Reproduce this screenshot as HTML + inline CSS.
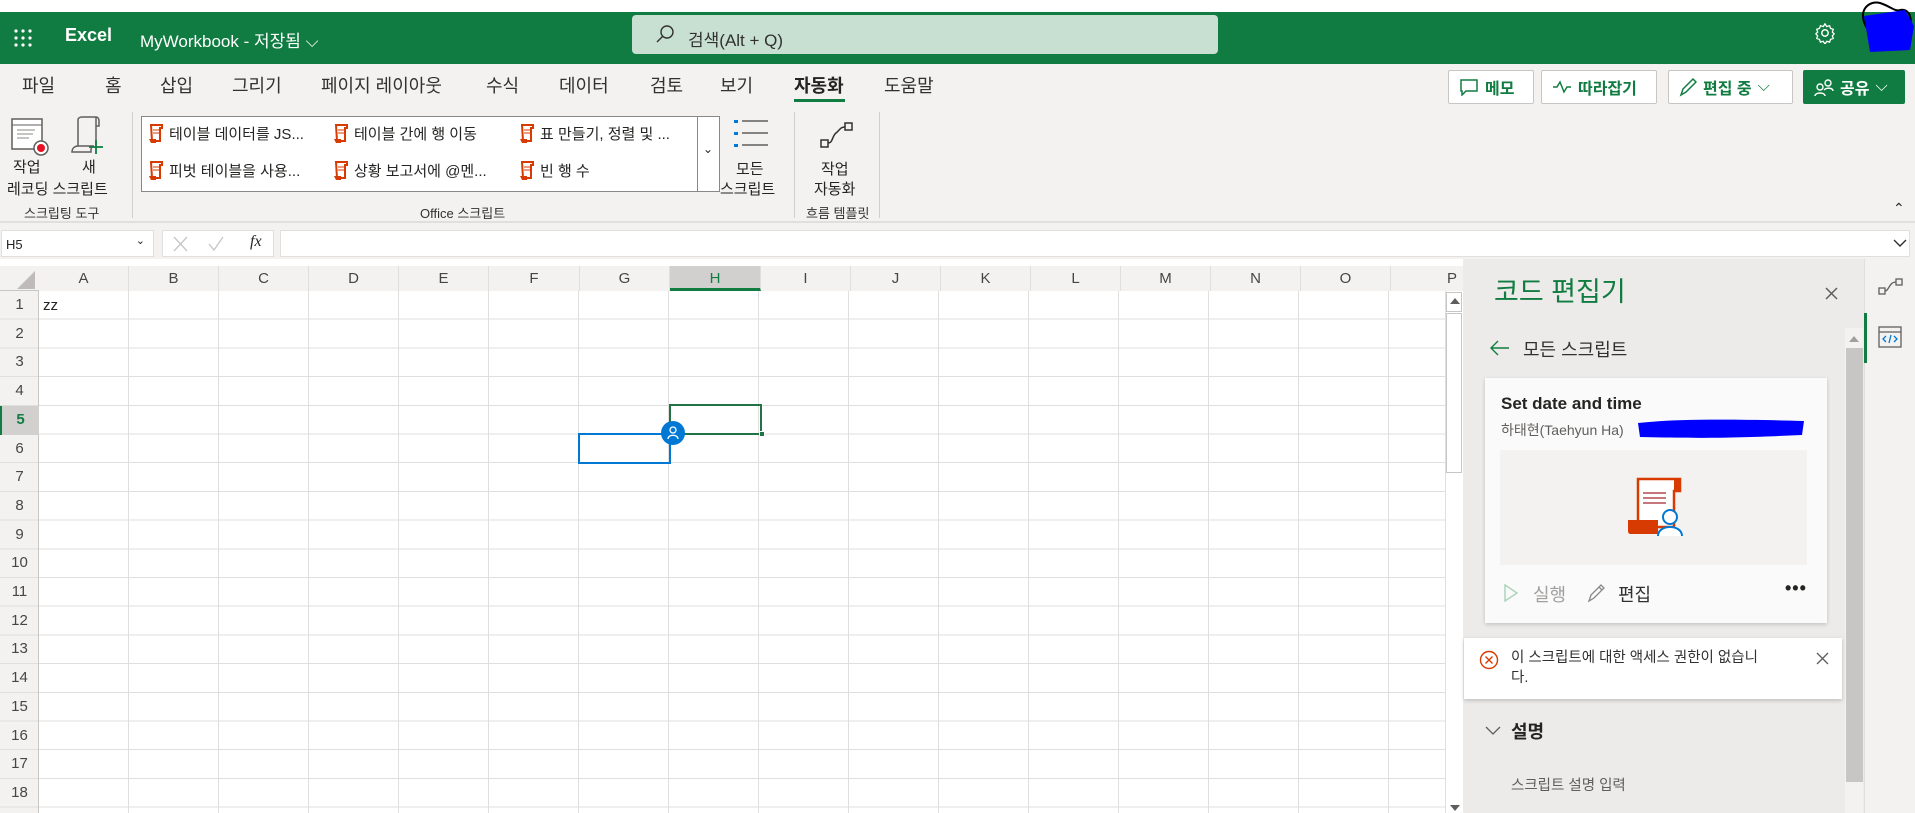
<!DOCTYPE html>
<html><head><meta charset="utf-8">
<style>
*{box-sizing:border-box;margin:0;padding:0}
body{width:1915px;height:813px;overflow:hidden;position:relative;background:#f3f2f1;font-family:"Liberation Sans","Noto Sans CJK KR",sans-serif;color:#252423}
.a{position:absolute;white-space:nowrap}
.top{left:0;top:12px;width:1915px;height:52px;background:#107c41}
.tab{top:72px;font-size:18px;color:#323130}
.btn{top:70px;height:34px;border:1px solid #c8c6c4;background:#fff;border-radius:2px;color:#107c41;font-weight:bold;font-size:16px;display:flex;align-items:center;padding-left:10px;gap:6px}
.gi{font-size:15px;color:#252423;display:flex;align-items:center;gap:5px}
.lbl{font-size:13px;color:#323130;top:203px}
.sep{top:112px;width:1px;height:106px;background:#d2d0ce}
.ch{top:266px;height:25px;background:#f3f2f1;font-size:15px;color:#484644;text-align:center;line-height:25px;border-right:1px solid #e1dfdd}
</style></head><body>
<div class="a" style="left:0;top:0;width:1915px;height:12px;background:#fff"></div>
<div class="a top"></div>
<svg class="a" style="left:14px;top:29px" width="18" height="18"><g fill="#fff"><circle cx="2" cy="2" r="1.6"/><circle cx="9" cy="2" r="1.6"/><circle cx="16" cy="2" r="1.6"/><circle cx="2" cy="9" r="1.6"/><circle cx="9" cy="9" r="1.6"/><circle cx="16" cy="9" r="1.6"/><circle cx="2" cy="16" r="1.6"/><circle cx="9" cy="16" r="1.6"/><circle cx="16" cy="16" r="1.6"/></g></svg>
<div class="a" style="left:65px;top:25px;color:#fff;font-size:18px;font-weight:bold">Excel</div>
<div class="a" style="left:140px;top:27px;color:#fff;font-size:17px">MyWorkbook - 저장됨 ⌵</div>
<div class="a" style="left:632px;top:15px;width:586px;height:39px;background:#c7e0d1;border-radius:4px"></div>
<svg class="a" style="left:655px;top:24px" width="20" height="20"><circle cx="12" cy="8" r="6" fill="none" stroke="#323130" stroke-width="1.4"/><line x1="8" y1="12" x2="2" y2="18" stroke="#323130" stroke-width="1.4"/></svg>
<div class="a" style="left:688px;top:26px;font-size:17px;color:#323130">검색(Alt + Q)</div>
<svg class="a" style="left:1814px;top:22px" width="22" height="22" viewBox="0 0 24 24"><circle cx="12" cy="12" r="3.5" fill="none" stroke="#fff" stroke-width="1.6"/><path d="M12 2l2 3 3-1 1 3 3 1-1 3 2 2-2 2 1 3-3 1-1 3-3-1-2 3-2-3-3 1-1-3-3-1 1-3-2-2 2-2-1-3 3-1 1-3 3 1z" fill="none" stroke="#fff" stroke-width="1.4"/></svg>
<svg class="a" style="left:1850px;top:0" width="65" height="56"><path d="M18 30 C5 10,20 0,30 3 C40 6,45 12,50 10 C60 8,64 20,58 35" fill="none" stroke="#000" stroke-width="2"/><path d="M14 16 L55 10 L64 26 L60 50 L20 52 Z" fill="#0000ff"/></svg>

<div class="a tab" style="left:22px">파일</div>
<div class="a tab" style="left:105px">홈</div>
<div class="a tab" style="left:160px">삽입</div>
<div class="a tab" style="left:232px">그리기</div>
<div class="a tab" style="left:321px">페이지 레이아웃</div>
<div class="a tab" style="left:486px">수식</div>
<div class="a tab" style="left:559px">데이터</div>
<div class="a tab" style="left:650px">검토</div>
<div class="a tab" style="left:720px">보기</div>
<div class="a tab" style="left:794px;font-weight:bold;color:#252423">자동화</div>
<div class="a" style="left:794px;top:99px;width:51px;height:3px;background:#107c41"></div>
<div class="a tab" style="left:884px">도움말</div>

<div class="a btn" style="left:1448px;width:86px"><svg width="20" height="18"><path d="M2 2h16v11H7l-4 4v-4H2z" fill="none" stroke="#107c41" stroke-width="1.5"/></svg>메모</div>
<div class="a btn" style="left:1541px;width:116px"><svg width="20" height="14"><path d="M1 7h4l3-5 4 10 3-5h4" fill="none" stroke="#107c41" stroke-width="1.5"/></svg>따라잡기</div>
<div class="a btn" style="left:1668px;width:125px"><svg width="18" height="20"><path d="M2 18l2-6L14 2l3 3L7 15z" fill="none" stroke="#107c41" stroke-width="1.5"/></svg>편집 중 <span style="font-weight:normal">⌵</span></div>
<div class="a btn" style="left:1803px;width:102px;background:#107c41;color:#fff;border-color:#107c41"><svg width="20" height="20"><circle cx="6" cy="10" r="3" fill="none" stroke="#fff" stroke-width="1.4"/><circle cx="14" cy="6" r="3" fill="none" stroke="#fff" stroke-width="1.4"/><path d="M1 19c0-4 10-4 10 0M10 13c3-3 9-2 9 1" fill="none" stroke="#fff" stroke-width="1.4"/></svg>공유 <span style="font-weight:normal">⌵</span></div>

<svg class="a" style="left:11px;top:118px" width="40" height="40"><rect x="1" y="1" width="30" height="30" fill="#fff" stroke="#605e5c" stroke-width="1.5"/><line x1="1" y1="7" x2="31" y2="7" stroke="#605e5c"/><g stroke="#8a8886"><line x1="6" y1="12" x2="24" y2="12"/><line x1="6" y1="16" x2="22" y2="16"/><line x1="6" y1="20" x2="18" y2="20"/></g><circle cx="30" cy="30" r="7" fill="#fff" stroke="#605e5c" stroke-width="1.5"/><circle cx="30" cy="30" r="4" fill="#e81123"/></svg>
<svg class="a" style="left:70px;top:116px" width="40" height="42"><path d="M8 30V4c0-2 2-3 4-3h14c2 0 3 2 3 4v5h-3M26 1v28" fill="none" stroke="#605e5c" stroke-width="1.5"/><path d="M2 36c0-4 3-6 6-6h16c-2 0-3 2-3 4v2z" fill="none" stroke="#605e5c" stroke-width="1.5"/><path d="M26 24v14M19 31h14" stroke="#107c41" stroke-width="1.8"/></svg>
<div class="a" style="left:13px;top:159px;font-size:15px;line-height:18px">작업</div>
<div class="a" style="left:82px;top:159px;font-size:15px;line-height:18px">새</div>
<div class="a" style="left:7px;top:178px;font-size:15px">레코딩 스크립트</div>
<div class="a lbl" style="left:24px">스크립팅 도구</div>
<div class="a sep" style="left:132px"></div>
<div class="a" style="left:141px;top:116px;width:579px;height:76px;background:#fff;border:1px solid #8a8886"></div>
<div class="a" style="left:697px;top:116px;width:1px;height:76px;background:#8a8886"></div>
<div class="a" style="left:703px;top:142px;font-size:12px">⌄</div>
<div class="a gi" style="left:148px;top:123px"><svg width="16" height="20"><path d="M3 1h11v3h-2v13H4z" fill="#fff" stroke="#d83b01" stroke-width="2"/><path d="M1 15h7v4H3z" fill="#d83b01"/><path d="M5 6h6M5 9h6" stroke="#d83b01"/></svg>테이블 데이터를 JS...</div>
<div class="a gi" style="left:333px;top:123px"><svg width="16" height="20"><path d="M3 1h11v3h-2v13H4z" fill="#fff" stroke="#d83b01" stroke-width="2"/><path d="M1 15h7v4H3z" fill="#d83b01"/><path d="M5 6h6M5 9h6" stroke="#d83b01"/></svg>테이블 간에 행 이동</div>
<div class="a gi" style="left:519px;top:123px"><svg width="16" height="20"><path d="M3 1h11v3h-2v13H4z" fill="#fff" stroke="#d83b01" stroke-width="2"/><path d="M1 15h7v4H3z" fill="#d83b01"/><path d="M5 6h6M5 9h6" stroke="#d83b01"/></svg>표 만들기, 정렬 및 ...</div>
<div class="a gi" style="left:148px;top:160px"><svg width="16" height="20"><path d="M3 1h11v3h-2v13H4z" fill="#fff" stroke="#d83b01" stroke-width="2"/><path d="M1 15h7v4H3z" fill="#d83b01"/><path d="M5 6h6M5 9h6" stroke="#d83b01"/></svg>피벗 테이블을 사용...</div>
<div class="a gi" style="left:333px;top:160px"><svg width="16" height="20"><path d="M3 1h11v3h-2v13H4z" fill="#fff" stroke="#d83b01" stroke-width="2"/><path d="M1 15h7v4H3z" fill="#d83b01"/><path d="M5 6h6M5 9h6" stroke="#d83b01"/></svg>상황 보고서에 @멘...</div>
<div class="a gi" style="left:519px;top:160px"><svg width="16" height="20"><path d="M3 1h11v3h-2v13H4z" fill="#fff" stroke="#d83b01" stroke-width="2"/><path d="M1 15h7v4H3z" fill="#d83b01"/><path d="M5 6h6M5 9h6" stroke="#d83b01"/></svg>빈 행 수</div>
<svg class="a" style="left:732px;top:118px" width="40" height="34"><g fill="#0078d4"><rect x="2" y="2" width="4" height="3"/><rect x="2" y="14" width="4" height="3"/><rect x="2" y="26" width="4" height="3"/></g><g stroke="#605e5c" stroke-width="1.5"><line x1="10" y1="3" x2="36" y2="3"/><line x1="10" y1="15" x2="36" y2="15"/><line x1="10" y1="27" x2="36" y2="27"/></g></svg>
<div class="a" style="left:736px;top:158px;font-size:15px">모든</div>
<div class="a" style="left:720px;top:178px;font-size:15px">스크립트</div>
<div class="a sep" style="left:794px"></div>
<svg class="a" style="left:820px;top:121px" width="34" height="30"><rect x="1" y="19" width="7" height="7" fill="none" stroke="#323130" stroke-width="1.5"/><rect x="25" y="2" width="7" height="7" fill="none" stroke="#323130" stroke-width="1.5"/><path d="M8 22c5 0 4-7 8-10s4-6 9-6" fill="none" stroke="#323130" stroke-width="1.5"/></svg>
<div class="a" style="left:821px;top:158px;font-size:15px">작업</div>
<div class="a" style="left:814px;top:178px;font-size:15px">자동화</div>
<div class="a lbl" style="left:806px">흐름 템플릿</div>
<div class="a lbl" style="left:420px">Office 스크립트</div>
<div class="a sep" style="left:879px"></div>
<div class="a" style="left:1893px;top:200px;font-size:14px">⌃</div>
<div class="a" style="left:0;top:221px;width:1915px;height:2px;background:#e1dfdd"></div>

<div class="a" style="left:0;top:229px;width:1915px;height:30px;background:#f3f2f1"></div>
<div class="a" style="left:1px;top:230px;width:153px;height:27px;background:#fff;border:1px solid #e1dfdd;font-size:13px;padding:6px 4px">H5<span style="position:absolute;right:8px;top:3px;font-size:11px">⌄</span></div>
<div class="a" style="left:162px;top:230px;width:112px;height:27px;background:#fff;border:1px solid #e1dfdd"></div>
<svg class="a" style="left:172px;top:234px" width="70" height="20"><path d="M2 3l13 14M15 3L2 17" stroke="#c8c6c4" stroke-width="1.3"/><path d="M37 10l5 6 9-13" fill="none" stroke="#c8c6c4" stroke-width="1.3"/></svg>
<div class="a" style="left:250px;top:233px;font-family:'Liberation Serif',serif;font-style:italic;font-size:16px">fx</div>
<div class="a" style="left:280px;top:230px;width:1630px;height:27px;background:#fff;border:1px solid #e1dfdd"></div>
<svg class="a" style="left:1893px;top:238px" width="14" height="10"><path d="M1 2l6 6 6-6" fill="none" stroke="#323130" stroke-width="1.4"/></svg>

<div class="a" style="left:0;top:259px;width:1463px;height:554px;background:#fff"></div>
<div class="a" style="left:0;top:266px;width:1463px;height:25px;background:#f3f2f1;border-bottom:1px solid #c8c6c4"></div>
<svg class="a" style="left:12px;top:270px" width="24" height="20"><path d="M23 1V19H5z" fill="#bebbb8"/></svg>
<div class="a ch" style="left:39px;width:90px">A</div><div class="a ch" style="left:129px;width:90px">B</div><div class="a ch" style="left:219px;width:90px">C</div><div class="a ch" style="left:309px;width:90px">D</div><div class="a ch" style="left:399px;width:90px">E</div><div class="a ch" style="left:489px;width:91px">F</div><div class="a ch" style="left:580px;width:90px">G</div><div class="a ch" style="left:670px;width:91px;background:#d2d0ce;color:#107c41;border-bottom:3px solid #107c41">H</div><div class="a ch" style="left:761px;width:90px">I</div><div class="a ch" style="left:851px;width:90px">J</div><div class="a ch" style="left:941px;width:90px">K</div><div class="a ch" style="left:1031px;width:90px">L</div><div class="a ch" style="left:1121px;width:90px">M</div><div class="a ch" style="left:1211px;width:90px">N</div><div class="a ch" style="left:1301px;width:90px">O</div><div class="a ch" style="left:1391px;width:72px;border:none;text-align:right;padding-right:6px">P</div>
<div class="a" style="left:39px;top:291px;width:1406px;height:522px;background-image:repeating-linear-gradient(to right,transparent 0,transparent 89px,#e1dfdd 89px,#e1dfdd 90px),repeating-linear-gradient(to bottom,transparent 0,transparent 27.7px,#e1dfdd 27.7px,#e1dfdd 28.7px)"></div>
<div class="a" style="left:0;top:291px;width:39px;height:522px;background:#f3f2f1;border-right:1px solid #c8c6c4;background-image:repeating-linear-gradient(to bottom,transparent 0,transparent 27.7px,#e1dfdd 27.7px,#e1dfdd 28.7px)"></div>
<div class="a" style="left:0;top:291px;width:39px;font-size:15px;color:#484644;line-height:28.7px;text-align:center;white-space:normal">1<br>2<br>3<br>4<br><span style="display:block;background:#d2d0ce;color:#107c41;font-weight:bold;border-left:2px solid #107c41">5</span>6<br>7<br>8<br>9<br>10<br>11<br>12<br>13<br>14<br>15<br>16<br>17<br>18</div>
<div class="a" style="left:43px;top:297px;font-size:15px">zz</div>
<div class="a" style="left:669px;top:404px;width:93px;height:31px;border:2px solid #217346"></div>
<div class="a" style="left:759px;top:431px;width:6px;height:6px;background:#217346;border:1px solid #fff"></div>
<div class="a" style="left:578px;top:433px;width:93px;height:31px;border:2px solid #0078d4"></div>
<div class="a" style="left:661px;top:421px;width:24px;height:24px;border-radius:50%;background:#0078d4"></div>
<svg class="a" style="left:665px;top:425px" width="16" height="16"><circle cx="8" cy="5" r="3" fill="none" stroke="#fff" stroke-width="1.3"/><path d="M3 14c0-5 10-5 10 0" fill="none" stroke="#fff" stroke-width="1.3"/></svg>
<div class="a" style="left:1445px;top:291px;width:18px;height:522px;background:#fff;border-left:1px solid #e1dfdd"></div>
<div class="a" style="left:1446px;top:292px;width:16px;height:20px;border:1px solid #c8c6c4"></div>
<svg class="a" style="left:1450px;top:298px" width="10" height="6"><path d="M0 6L5 0 10 6z" fill="#605e5c"/></svg>
<div class="a" style="left:1446px;top:313px;width:16px;height:160px;border:1px solid #c8c6c4;background:#fff"></div>
<svg class="a" style="left:1450px;top:805px" width="10" height="6"><path d="M0 0L5 6 10 0z" fill="#605e5c"/></svg>

<div class="a" style="left:1463px;top:259px;width:402px;height:554px;background:#edebe9"></div>
<div class="a" style="left:1494px;top:270px;font-size:27px;color:#107c41">코드 편집기</div>
<svg class="a" style="left:1825px;top:287px" width="13" height="13"><path d="M1 1l11 11M12 1L1 12" stroke="#605e5c" stroke-width="1.5"/></svg>
<div class="a" style="left:1845px;top:328px;width:18px;height:485px;background:#f3f2f1"></div>
<svg class="a" style="left:1849px;top:336px" width="10" height="6"><path d="M0 6L5 0 10 6z" fill="#a19f9d"/></svg>
<div class="a" style="left:1846px;top:348px;width:17px;height:434px;background:#c8c6c4"></div>
<div class="a" style="left:1864px;top:259px;width:51px;height:554px;background:#f3f2f1;border-left:1px solid #e1dfdd"></div>
<div class="a" style="left:1864px;top:313px;width:3px;height:50px;background:#107c41"></div>
<svg class="a" style="left:1878px;top:277px" width="26" height="20"><rect x="1" y="11" width="6" height="6" fill="none" stroke="#605e5c" stroke-width="1.3"/><rect x="18" y="2" width="6" height="6" fill="none" stroke="#605e5c" stroke-width="1.3"/><path d="M7 14c4 0 4-9 11-9" fill="none" stroke="#605e5c" stroke-width="1.3"/></svg>
<svg class="a" style="left:1878px;top:325px" width="24" height="24"><rect x="1" y="2" width="22" height="20" fill="none" stroke="#605e5c" stroke-width="1.3"/><line x1="1" y1="7" x2="23" y2="7" stroke="#605e5c" stroke-width="1.3"/><path d="M8 11l-3 3 3 3M16 11l3 3-3 3M13 10l-2 8" fill="none" stroke="#0078d4" stroke-width="1.3"/></svg>
<svg class="a" style="left:1490px;top:340px" width="20" height="16"><path d="M1 8h18M8 1L1 8l7 7" fill="none" stroke="#107c41" stroke-width="1.4"/></svg>
<div class="a" style="left:1523px;top:336px;font-size:18px;color:#323130">모든 스크립트</div>

<div class="a" style="left:1485px;top:378px;width:342px;height:245px;background:#fafafa;box-shadow:0 1.6px 4px rgba(0,0,0,.18)"></div>
<div class="a" style="left:1501px;top:394px;font-size:17px;font-weight:bold;color:#252423">Set date and time</div>
<div class="a" style="left:1501px;top:420px;font-size:14px;color:#605e5c">하태현(Taehyun Ha)</div>
<svg class="a" style="left:1636px;top:417px" width="170" height="24"><path d="M2 6 C40 2,90 2,168 4 L166 18 C120 20,80 22,4 20 Z" fill="#0000ff"/></svg>
<div class="a" style="left:1500px;top:450px;width:307px;height:115px;background:#f3f2f1"></div>
<svg class="a" style="left:1625px;top:477px" width="60" height="60"><path d="M13 2h42v12h-6v36H13z" fill="#fff" stroke="#d83b01" stroke-width="2.5"/><path d="M49 2h5c1 0 2 1 2 3v9h-7z" fill="#d83b01"/><path d="M3 43h30v14H6c-2 0-3-1-3-3z" fill="#d83b01"/><path d="M18 16h23M18 21h23M18 26h23" stroke="#a4262c" stroke-width="1.3"/><circle cx="45" cy="40" r="7" fill="#fff" stroke="#0078d4" stroke-width="2"/><path d="M33 59c0-12 24-12 24 0" fill="#fff" stroke="#0078d4" stroke-width="2"/></svg>
<svg class="a" style="left:1503px;top:583px" width="16" height="20"><path d="M2 2l12 8-12 8z" fill="none" stroke="#a9d3b8" stroke-width="1.4"/></svg>
<div class="a" style="left:1533px;top:581px;font-size:18px;color:#a19f9d">실행</div>
<svg class="a" style="left:1587px;top:583px" width="20" height="20"><path d="M2 18l2-6L14 2l3 3L7 15zM12 4l3 3" fill="none" stroke="#8a8886" stroke-width="1.3"/></svg>
<div class="a" style="left:1618px;top:581px;font-size:18px;color:#323130">편집</div>
<div class="a" style="left:1785px;top:578px;font-size:18px;font-weight:bold;letter-spacing:1px">•••</div>

<div class="a" style="left:1464px;top:638px;width:378px;height:61px;background:#fff;box-shadow:0 1.6px 4px rgba(0,0,0,.2)"></div>
<svg class="a" style="left:1479px;top:650px" width="20" height="20"><circle cx="10" cy="10" r="8.5" fill="none" stroke="#d83b01" stroke-width="1.4"/><path d="M6.5 6.5l7 7M13.5 6.5l-7 7" stroke="#d83b01" stroke-width="1.4"/></svg>
<div class="a" style="left:1511px;top:648px;font-size:14.5px;line-height:20px;color:#323130">이 스크립트에 대한 액세스 권한이 없습니<br>다.</div>
<svg class="a" style="left:1816px;top:652px" width="13" height="13"><path d="M1 1l11 11M12 1L1 12" stroke="#605e5c" stroke-width="1.3"/></svg>

<svg class="a" style="left:1485px;top:726px" width="16" height="10"><path d="M1 1l7 7 7-7" fill="none" stroke="#605e5c" stroke-width="1.3"/></svg>
<div class="a" style="left:1511px;top:718px;font-size:18px;font-weight:bold">설명</div>
<div class="a" style="left:1511px;top:774px;font-size:14.5px;color:#605e5c">스크립트 설명 입력</div>
</body></html>
